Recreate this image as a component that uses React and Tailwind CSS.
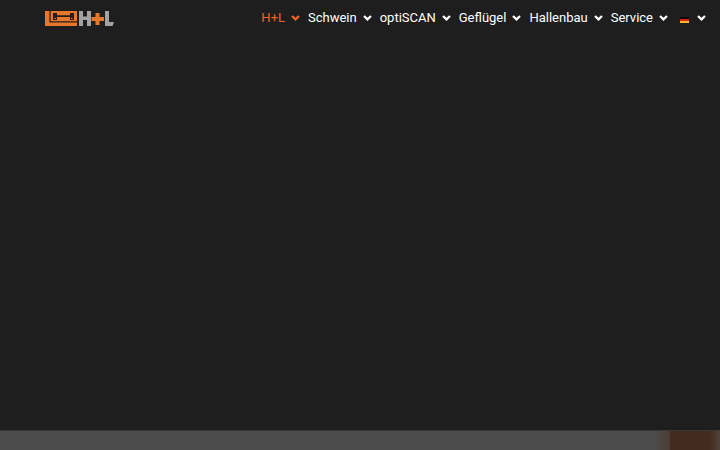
import React from "react";

const navItems = [
  { name: "H+L", active: true },
  { name: "Schwein" },
  { name: "optiSCAN" },
  { name: "Geflügel" },
  { name: "Hallenbau" },
  { name: "Service" },
];

const Chevron = () => (
  <svg viewBox="0 0 9 6" className="w-[9px] h-1.5" fill="none" aria-hidden="true">
    <path d="M1 1 L4.5 4.4 L8 1" stroke="currentColor" strokeWidth="2.2" />
  </svg>
);

const Logo = () => (
  <svg viewBox="0 0 69 15" className="w-[69px] h-[15px]" aria-hidden="true">
    {/* stall symbol */}
    <path fill="#e8772e" d="M0 0H32V15H0Z" />
    <path
      fill="none"
      stroke="#1e1e1e"
      strokeWidth="1.2"
      d="M5 0V10.8H32"
    />
    <path
      fill="#2a1c14"
      d="M8 2H12V4.2H25V2H29V9H25V6H12V9H8Z"
    />
    <path fill="#e8772e" d="M9.5 7H11V8H9.5Z M26 7H27.5V8H26Z" />
    {/* letter marks */}
    <path fill="#a3a3a3" d="M34 0H38V5.5H42V0H46V15H42V9H38V15H34Z" />
    <path fill="#e8772e" d="M50.5 2H54.5V6H59V10H54.5V14H50.5V10H46.5V6H50.5Z" />
    <path fill="#a3a3a3" d="M60 0H64V11H69L67.5 15H60Z" />
  </svg>
);

const GermanFlag = () => (
  <svg viewBox="0 0 9 6" className="w-[9px] h-1.5 mt-1" aria-hidden="true">
    <path fill="#0c0c0c" d="M0 0H9V2H0Z" />
    <path fill="#dc2414" d="M0 2H9V4H0Z" />
    <path fill="#f5b52c" d="M0 4H9V6H0Z" />
  </svg>
);

const Navbar = () => {
  return (
    <header className="flex items-center justify-between h-9 pl-[45px] pr-3.5">
      <a href="#" aria-label="H+L">
        <Logo />
      </a>

      <nav className="flex items-center gap-2 text-[13px] leading-5">
        {navItems.map((item) => (
          <button
            key={item.name}
            className={`flex items-center gap-1.5 ${
              item.active ? "text-[#f26522]" : "text-white"
            }`}
          >
            {item.name}
            <Chevron />
          </button>
        ))}

        {/* LANGUAGE */}
        <button
          aria-label="Deutsch"
          className="flex items-center gap-2 pl-1 text-white"
        >
          <GermanFlag />
          <Chevron />
        </button>
      </nav>
    </header>
  );
};

const App = () => {
  return (
    <div className="flex flex-col h-screen bg-[#1e1e1e] font-['Roboto',sans-serif]">
      <Navbar />

      <main className="flex flex-1 flex-col justify-end">
        {/* top edge of the next section, under the dark overlay */}
        <div className="flex h-5 border-t border-[#383838] bg-[#4c4c4c]">
          <div className="ml-auto w-4 bg-linear-to-r from-[#4c4c4c] to-[#4b3c34]" />
          <div className="w-[50px] bg-linear-to-r from-[#432b20] from-80% to-[#51423b]" />
        </div>
      </main>
    </div>
  );
};

export default App;
